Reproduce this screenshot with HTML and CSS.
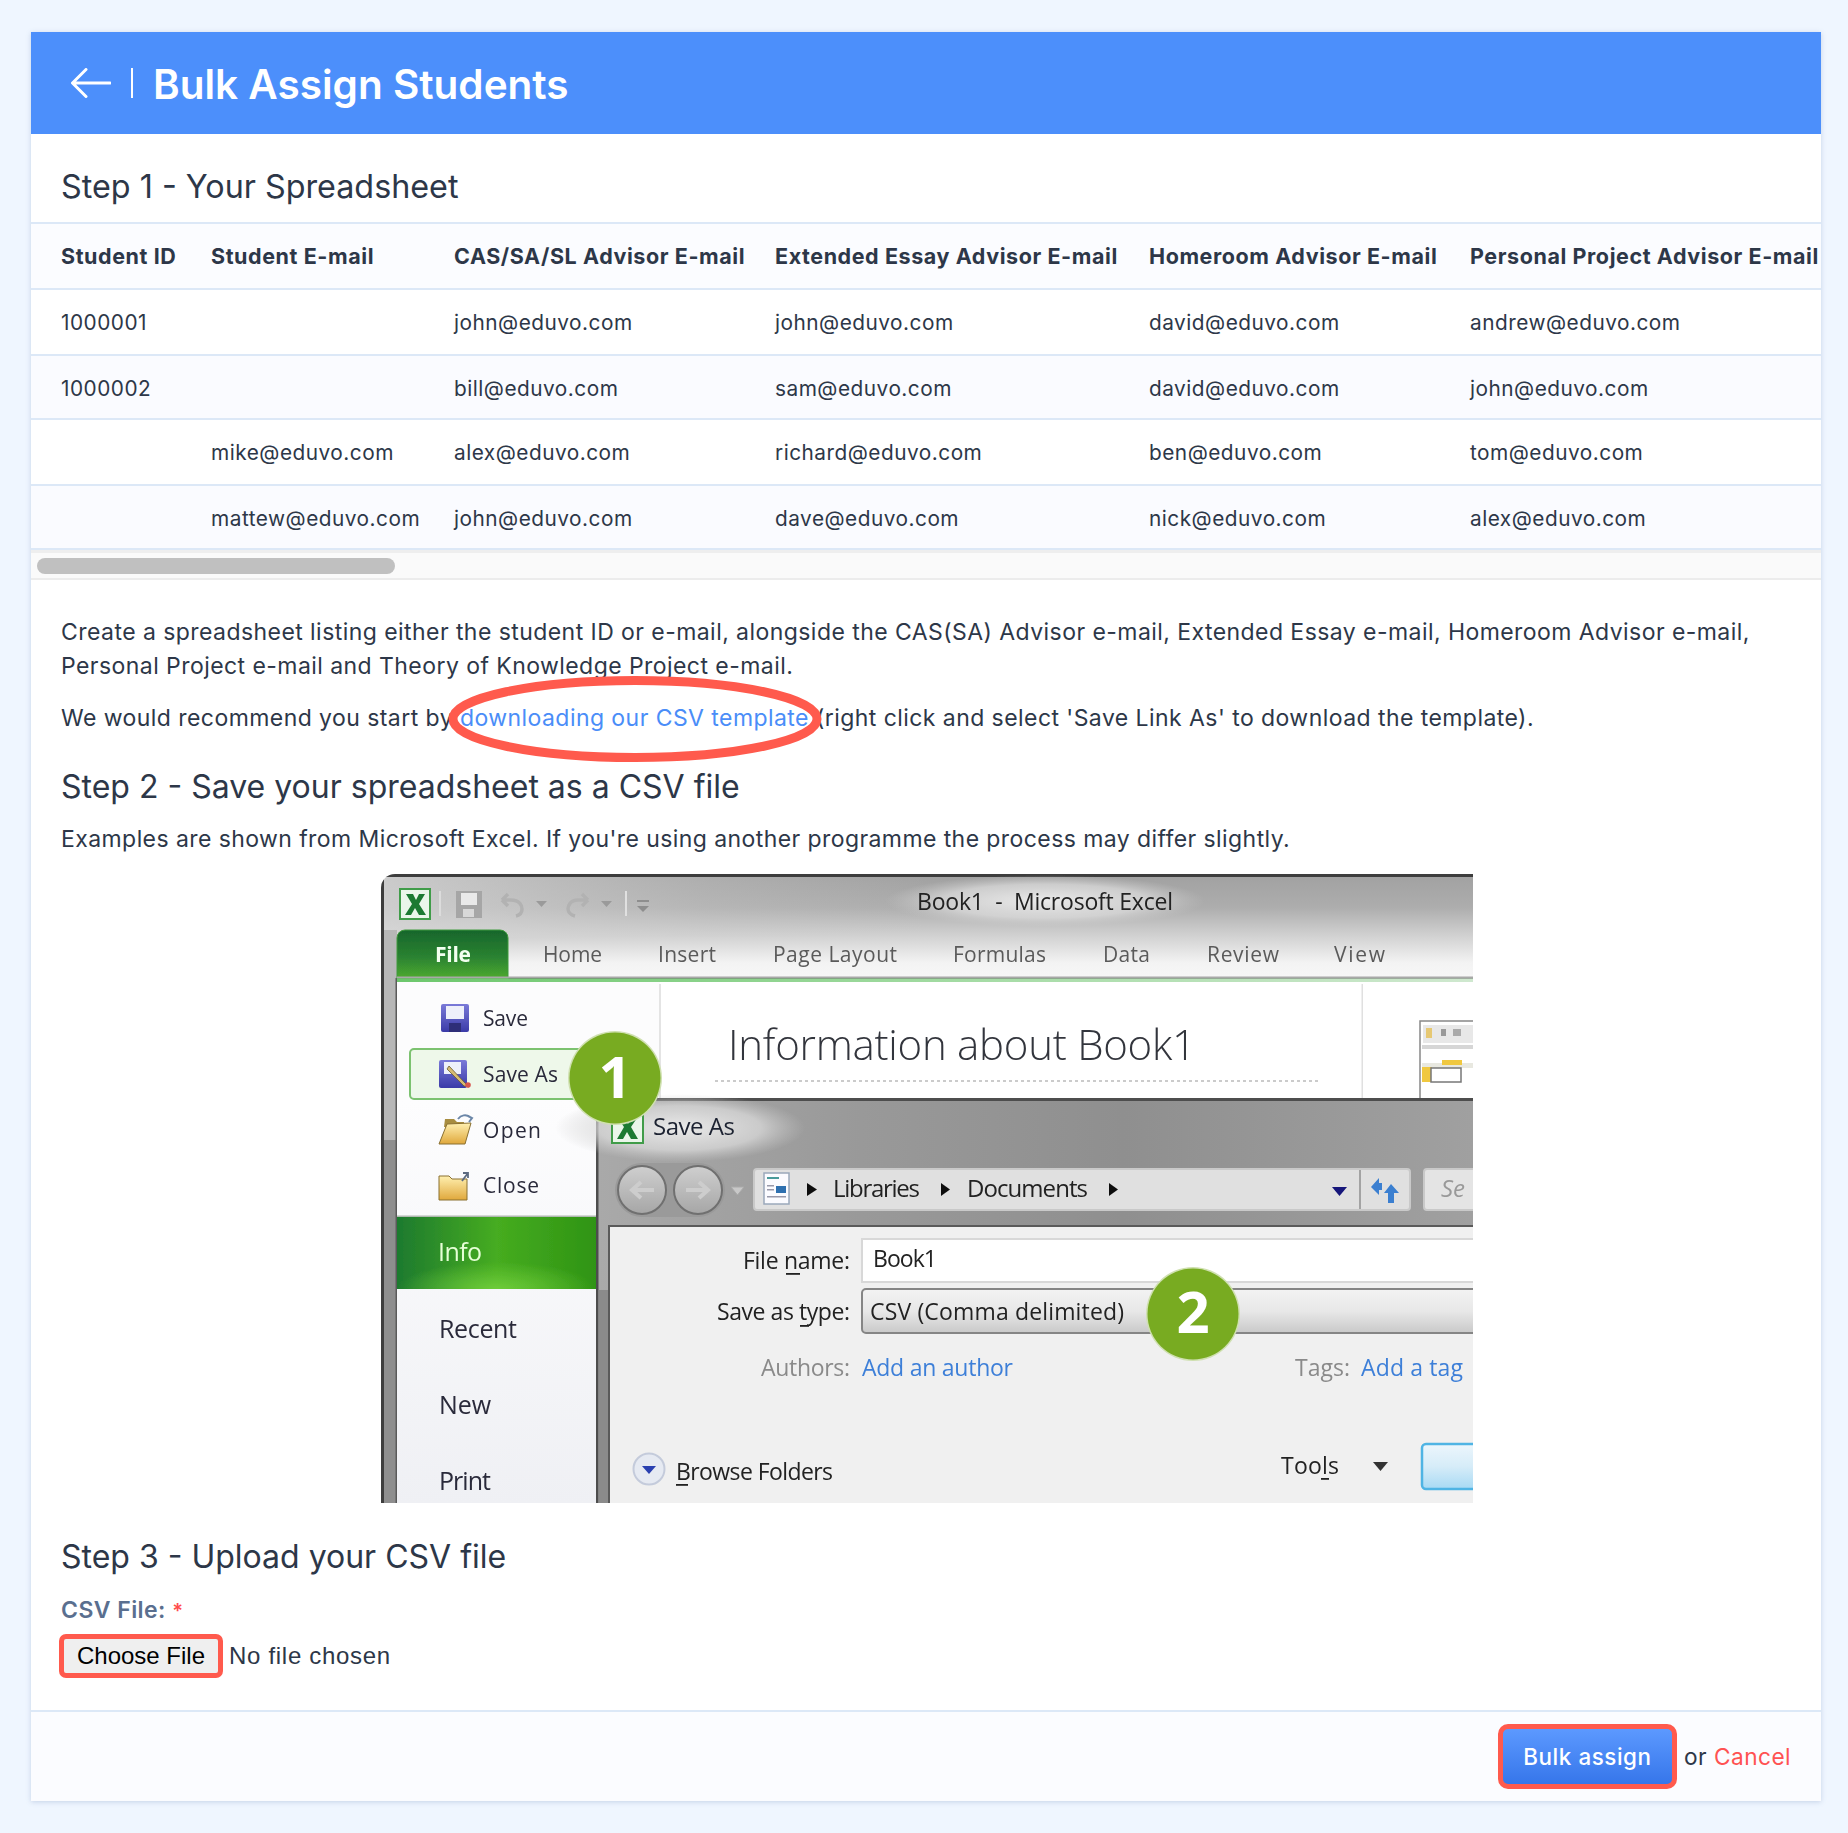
FILE: index.html
```html
<!DOCTYPE html>
<html lang="en">
<head>
<meta charset="utf-8">
<title>Bulk Assign Students</title>
<link rel="stylesheet" href="styles.css">
</head>
<body>
<main class="card">
  <header class="card-head">
    <a class="back" href="#" aria-label="Back">
      <svg class="back-icon" viewBox="0 0 40 30" width="40" height="30"><path d="M39 15H2M15 1.500 1.500 15 15 28.500" fill="none" stroke="#fff" stroke-width="3" stroke-linecap="round" stroke-linejoin="round"/></svg>
    </a>
    <span class="head-sep"></span>
    <h1>Bulk Assign Students</h1>
  </header>

  <h2 class="step-one">Step 1 - Your Spreadsheet</h2>

  <table class="sheet">
    <colgroup><col class="c1"><col class="c2"><col class="c3"><col class="c4"><col class="c5"><col class="c6"></colgroup>
    <thead>
      <tr><th>Student ID</th><th>Student E-mail</th><th>CAS/SA/SL Advisor E-mail</th><th>Extended Essay Advisor E-mail</th><th>Homeroom Advisor E-mail</th><th>Personal Project Advisor E-mail</th></tr>
    </thead>
    <tbody>
      <tr><td>1000001</td><td></td><td>john@eduvo.com</td><td>john@eduvo.com</td><td>david@eduvo.com</td><td>andrew@eduvo.com</td></tr>
      <tr><td>1000002</td><td></td><td>bill@eduvo.com</td><td>sam@eduvo.com</td><td>david@eduvo.com</td><td>john@eduvo.com</td></tr>
      <tr><td></td><td>mike@eduvo.com</td><td>alex@eduvo.com</td><td>richard@eduvo.com</td><td>ben@eduvo.com</td><td>tom@eduvo.com</td></tr>
      <tr><td></td><td>mattew@eduvo.com</td><td>john@eduvo.com</td><td>dave@eduvo.com</td><td>nick@eduvo.com</td><td>alex@eduvo.com</td></tr>
    </tbody>
  </table>
  <div class="scrollbar"><div class="thumb"></div></div>

  <section class="body">
    <p class="intro">Create a spreadsheet listing either the student ID or e-mail, alongside the CAS(SA) Advisor e-mail, Extended Essay e-mail, Homeroom Advisor e-mail, Personal Project e-mail and Theory of Knowledge Project e-mail.</p>
    <p class="recommend">We would recommend you start by <span class="circled"><a href="#">downloading our CSV template</a><svg class="ring" viewBox="0 0 376 86" width="376" height="86"><ellipse cx="188" cy="43" rx="182" ry="38.500" fill="none" stroke="#ff5a4d" stroke-width="9"/></svg></span> (right click and select 'Save Link As' to download the template).</p>

    <h2 class="step-two">Step 2 - Save your spreadsheet as a CSV file</h2>
    <p class="examples">Examples are shown from Microsoft Excel. If you're using another programme the process may differ slightly.</p>

    <svg class="excel" viewBox="381 874 1092 629" width="1092" height="629" role="img" aria-label="Microsoft Excel Save As dialog">
      <defs>
        <linearGradient id="glass" x1="0" y1="0" x2="0" y2="1"><stop offset="0" stop-color="#a2a2a2"/><stop offset=".3" stop-color="#adadad"/><stop offset=".62" stop-color="#d6d6d6"/><stop offset=".85" stop-color="#f3f3f3"/><stop offset="1" stop-color="#f7f7f7"/></linearGradient>
        <linearGradient id="glassLeft" x1="0" y1="0" x2="1" y2="0"><stop offset="0" stop-color="#d8d8d8" stop-opacity=".75"/><stop offset=".3" stop-color="#d0d0d0" stop-opacity=".25"/><stop offset=".5" stop-color="#d0d0d0" stop-opacity="0"/></linearGradient>
        <linearGradient id="tab" x1="0" y1="0" x2="0" y2="1"><stop offset="0" stop-color="#17662c"/><stop offset=".55" stop-color="#2a8230"/><stop offset="1" stop-color="#4eab2f"/></linearGradient>
        <linearGradient id="side" x1="0" y1="0" x2="0" y2="1"><stop offset="0" stop-color="#fdfdfe"/><stop offset="1" stop-color="#eff0f4"/></linearGradient>
        <linearGradient id="rule" x1="0" y1="0" x2="1" y2="0"><stop offset="0" stop-color="#6cc76c"/><stop offset=".55" stop-color="#a6dca6"/><stop offset="1" stop-color="#cfe8cf"/></linearGradient>
        <linearGradient id="info" x1="0" y1="0" x2="1" y2="0"><stop offset="0" stop-color="#1d7a2f"/><stop offset=".5" stop-color="#46ac20"/><stop offset="1" stop-color="#2f9414"/></linearGradient>
        <radialGradient id="infoGlow" cx=".5" cy="1" r=".5"><stop offset="0" stop-color="#72cf3c" stop-opacity=".9"/><stop offset="1" stop-color="#72cf3c" stop-opacity="0"/></radialGradient>
        <linearGradient id="dlg" x1="0" y1="0" x2="1" y2="0"><stop offset="0" stop-color="#a9a9a9"/><stop offset=".3" stop-color="#999"/><stop offset=".6" stop-color="#8f8f8f"/><stop offset="1" stop-color="#a0a0a0"/></linearGradient>
        <radialGradient id="glow"><stop offset="0" stop-color="#eee" stop-opacity=".95"/><stop offset=".65" stop-color="#ddd" stop-opacity=".7"/><stop offset="1" stop-color="#ccc" stop-opacity="0"/></radialGradient>
        <linearGradient id="nav" x1="0" y1="0" x2="0" y2="1"><stop offset="0" stop-color="#cfcfcf"/><stop offset="1" stop-color="#a6a6a6"/></linearGradient>
        <linearGradient id="select" x1="0" y1="0" x2="0" y2="1"><stop offset="0" stop-color="#f3f3f3"/><stop offset=".5" stop-color="#e8e8e8"/><stop offset="1" stop-color="#c9c9c9"/></linearGradient>
        <linearGradient id="okBtn" x1="0" y1="0" x2="0" y2="1"><stop offset="0" stop-color="#ecf6fc"/><stop offset=".5" stop-color="#d6ecf8"/><stop offset="1" stop-color="#a8daf4"/></linearGradient>
        <linearGradient id="floppy" x1="0" y1="0" x2="0" y2="1"><stop offset="0" stop-color="#7a7ad8"/><stop offset="1" stop-color="#3a3aa8"/></linearGradient>
        <linearGradient id="folder" x1="0" y1="0" x2="0" y2="1"><stop offset="0" stop-color="#fff0b0"/><stop offset="1" stop-color="#e0a83c"/></linearGradient>
        <clipPath id="win"><path d="M381 1503V888a14 14 0 0 1 14-14H1473V1503Z"/></clipPath>
        <filter id="soft" x="-2%" y="-2%" width="104%" height="104%"><feGaussianBlur stdDeviation=".6"/></filter>
      </defs>

      <g clip-path="url(#win)">
        <g filter="url(#soft)">
          <!-- window chrome -->
          <rect x="381" y="874" width="1092" height="630" fill="#3c3c3c"/>
          <rect x="384" y="877" width="1089" height="101" fill="url(#glass)"/>
          <rect x="384" y="877" width="1089" height="60" fill="url(#glassLeft)"/>
          <rect x="384" y="930" width="13" height="574" fill="#b7b7b7"/>
          <rect x="384" y="1140" width="13" height="364" fill="#8e8e8e"/>
          <rect x="395.500" y="978" width="1.500" height="526" fill="#5a5a5a"/>

          <!-- title -->
          <ellipse cx="1045" cy="901" rx="160" ry="26" fill="url(#glow)"/>
          <text class="xl xl-title" x="917" y="910" textLength="256">Book1&#160;&#160;-&#160;&#160;Microsoft Excel</text>

          <!-- quick access -->
          <rect x="400" y="889" width="30" height="30" fill="#eaf6ea" stroke="#3f9c4a" stroke-width="2"/>
          <path d="M406 894h7l3 6 3-6h6l-6 10 7 11h-7l-4-7-4 7h-6l7-11z" fill="#1f7a33"/>
          <rect x="439" y="891" width="2" height="25" fill="#dcdcdc"/>
          <path d="M456 891h26v27h-26z" fill="#a6a6a6"/><rect x="461" y="893" width="16" height="12" fill="#e9e9e9"/><rect x="463" y="909" width="11" height="8" fill="#d8d8d8"/>
          <path d="M502 900h9c9 0 11 6 11 9s-2 6-6 7M502 900l6-6M502 900l6 6" fill="none" stroke="#b2b2b2" stroke-width="3.500"/>
          <path d="M536 901h11l-5.500 6z" fill="#9a9a9a"/>
          <path d="M588 900h-10c-8 0-10 6-10 9s3 6 7 7M588 900l-6-6M588 900l-6 6" fill="none" stroke="#b2b2b2" stroke-width="3.500"/>
          <path d="M601 901h11l-5.500 6z" fill="#9a9a9a"/>
          <rect x="625" y="891" width="2" height="25" fill="#e0e0e0"/>
          <rect x="637" y="900" width="12" height="2" fill="#8e8e8e"/><path d="M637 906h12l-6 6z" fill="#8e8e8e"/>

          <!-- ribbon tabs -->
          <path d="M397 979v-41a8 8 0 0 1 8-8h95a8 8 0 0 1 8 8v41z" fill="url(#tab)" stroke="#3f9a3c" stroke-width="1"/>
          <text class="xl xl-file" x="435" y="962" textLength="36">File</text>
          <g class="xl xl-tab">
            <text x="543" y="962" textLength="59">Home</text>
            <text x="658" y="962" textLength="58">Insert</text>
            <text x="773" y="962" textLength="124">Page Layout</text>
            <text x="953" y="962" textLength="93">Formulas</text>
            <text x="1103" y="962" textLength="47">Data</text>
            <text x="1207" y="962" textLength="72">Review</text>
            <text x="1334" y="962" textLength="51">View</text>
          </g>
          <rect x="397" y="976.500" width="1076" height="2" fill="#a8a8a8"/>
          <rect x="397" y="978.500" width="1076" height="4" fill="url(#rule)"/>

          <!-- backstage -->
          <rect x="397" y="982" width="1076" height="118" fill="#fff"/>
          <rect x="397" y="982" width="263" height="120" fill="#fcfcfd"/>
          <rect x="397" y="1100" width="199" height="404" fill="url(#side)"/>
          <rect x="659" y="984" width="2" height="114" fill="#e4e4e4"/>
          <rect x="1361.500" y="984" width="1.500" height="114" fill="#e0e0e0"/>

          <!-- menu items -->
          <rect x="441" y="1004" width="28" height="28" rx="2" fill="url(#floppy)"/><rect x="446" y="1006" width="18" height="13" fill="#eef0fa"/><rect x="449" y="1023" width="12" height="9" fill="#2e2e78"/>
          <text class="xl xl-menu" x="483" y="1026" textLength="45">Save</text>
          <rect x="410" y="1049" width="185" height="50" rx="4" fill="#eef8ea" stroke="#7bc26f" stroke-width="2"/>
          <rect x="439" y="1060" width="28" height="28" rx="2" fill="url(#floppy)"/><rect x="444" y="1062" width="17" height="12" fill="#eef0fa"/>
          <path d="M449 1066l16 17 4 4-5-1-17-17z" fill="#d6bb72" stroke="#6a5a30" stroke-width=".8"/><circle cx="468" cy="1085" r="2.800" fill="#d8564e"/>
          <text class="xl xl-menu" x="483" y="1082" textLength="75">Save As</text>
          <path d="M445 1119h9l3 3h7v5h-20z" fill="#a88d40"/><path d="M447 1124l24-1-6 21h-26z" fill="url(#folder)" stroke="#8a7030" stroke-width="1"/><path d="M458 1119c3-4 8-5 12-2l-2-1 4 2-3 4" fill="none" stroke="#6c87a8" stroke-width="2"/>
          <text class="xl xl-menu" x="483" y="1138" textLength="58">Open</text>
          <path d="M439 1176h10l3 3h15v21h-28z" fill="url(#folder)" stroke="#8a7030" stroke-width="1"/><path d="M462 1181l6-8M463 1173h5v5" fill="none" stroke="#5b6a80" stroke-width="1.800"/>
          <text class="xl xl-menu" x="483" y="1193" textLength="56">Close</text>
          <rect x="397" y="1217" width="199" height="72" fill="url(#info)"/>
          <rect x="397" y="1235" width="199" height="54" fill="url(#infoGlow)"/>
          <rect x="397" y="1215.500" width="199" height="1.500" fill="#b0b8b0"/>
          <text class="xl xl-info" x="438" y="1261" textLength="44">Info</text>
          <g class="xl xl-nav">
            <text x="439" y="1338" textLength="78">Recent</text>
            <text x="439" y="1414" textLength="52">New</text>
            <text x="439" y="1490" textLength="52">Print</text>
          </g>

          <!-- information heading -->
          <text class="xl xl-infoh" x="728" y="1060" textLength="468">Information about Book1</text>
          <line x1="715" y1="1081" x2="1318" y2="1081" stroke="#bbb" stroke-width="1.500" stroke-dasharray="3 3"/>
          <rect x="1420" y="1021" width="60" height="80" fill="#fff" stroke="#888" stroke-width="1.500"/>
          <rect x="1423" y="1025" width="50" height="18" fill="#e8e8e8"/><rect x="1426" y="1028" width="6" height="10" fill="#e6c873"/><rect x="1441" y="1029" width="5" height="7" fill="#999"/><rect x="1453" y="1029" width="8" height="7" fill="#aaa"/>
          <rect x="1422" y="1045" width="51" height="4" fill="#d6d6d6"/><rect x="1422" y="1063" width="51" height="5" fill="#e8e8e0"/><rect x="1442" y="1060" width="20" height="5" fill="#f0c840"/><rect x="1422" y="1067" width="10" height="15" fill="#f0c840"/><rect x="1431" y="1068" width="30" height="14" fill="#fff" stroke="#777" stroke-width="1.500"/>

          <!-- dialog -->
          <rect x="596" y="1098" width="877" height="406" fill="#4d4d4d"/>
          <rect x="598.500" y="1101" width="874.500" height="403" fill="url(#dlg)"/>
          <rect x="598.500" y="1290" width="11" height="214" fill="#8b8b8b"/>
          <ellipse cx="680" cy="1128" rx="125" ry="34" fill="url(#glow)"/>
          <rect x="612" y="1113" width="31" height="30" fill="#eaf6ea" stroke="#3f9c4a" stroke-width="2"/>
          <path d="M618 1118h7l3 6 3-6h6l-6 9 7 12h-7l-4-7-4 7h-6l7-12z" fill="#1f7a33"/>
          <text class="xl xl-saveas" x="653" y="1135" textLength="82">Save As</text>

          <!-- navigation -->
          <path d="M642 1163h56a27 27 0 0 1 0 54h-56a27 27 0 0 1 0-54z" fill="#9a9a9a"/>
          <circle cx="642" cy="1190" r="24" fill="url(#nav)" stroke="#6f6f6f" stroke-width="2"/>
          <circle cx="698" cy="1190" r="24" fill="url(#nav)" stroke="#6f6f6f" stroke-width="2"/>
          <path d="M654 1190h-20M641 1182l-9 8 9 8" fill="none" stroke="#cdcdcd" stroke-width="4"/>
          <path d="M686 1190h20M699 1182l9 8-9 8" fill="none" stroke="#cdcdcd" stroke-width="4"/>
          <path d="M731 1187h13l-6.500 8z" fill="#c8c8c8" stroke="#aaa" stroke-width="1"/>

          <!-- address bar -->
          <rect x="754" y="1169" width="656" height="41" rx="3" fill="#e0e0e0" stroke="#c9c9c9" stroke-width="2"/>
          <line x1="1360" y1="1170" x2="1360" y2="1209" stroke="#8f8f8f" stroke-width="1.500"/>
          <rect x="764" y="1173" width="25" height="31" fill="#fbfbff" stroke="#9aa8bb" stroke-width="1.500"/><rect x="767" y="1177" width="12" height="2" fill="#4a9a9a"/><rect x="776" y="1186" width="10" height="7" fill="#2f6fb0"/><rect x="767" y="1196" width="19" height="1.500" fill="#99a"/><rect x="767" y="1185" width="7" height="1.500" fill="#99a"/><rect x="767" y="1189" width="7" height="1.500" fill="#99a"/>
          <path d="M807 1183l10 6.500-10 6.500z" fill="#111"/>
          <path d="M941 1183l9 6.500-9 6.500z" fill="#111"/>
          <path d="M1109 1183l9 6.500-9 6.500z" fill="#111"/>
          <g class="xl xl-addr">
            <text x="833" y="1197" textLength="87">Libraries</text>
            <text x="967" y="1197" textLength="121">Documents</text>
          </g>
          <path d="M1332 1187h15l-7.500 9z" fill="#14147a"/>
          <path d="M1371 1187l8-9v5h3v7h-3v5zM1399 1193l-8-9-7 9h4v10h6v-10z" fill="#3a7fd0"/>
          <rect x="1424" y="1169" width="60" height="41" rx="3" fill="#e4e4e4" stroke="#c9c9c9" stroke-width="2"/>
          <text class="xl xl-search" x="1441" y="1197">Se</text>

          <!-- form panel -->
          <rect x="609" y="1226" width="874" height="288" fill="#f0f0f0" stroke="#5a5a5a" stroke-width="2"/>
          <rect x="611" y="1228" width="862" height="276" fill="#f0f0f0"/>
          <g class="xl xl-form">
            <text x="743" y="1269" textLength="107">File name:</text>
            <text x="717" y="1320" textLength="133">Save as type:</text>
            <text x="676" y="1480" textLength="157">Browse Folders</text>
            <text x="1281" y="1474" textLength="58">Tools</text>
          </g>
          <rect x="786" y="1273" width="14" height="1.800" fill="#222"/><rect x="800" y="1325" width="9" height="1.800" fill="#222"/><rect x="676" y="1484" width="12" height="1.800" fill="#222"/><rect x="1321" y="1478" width="8" height="1.800" fill="#222"/>
          <rect x="862" y="1239" width="620" height="43" fill="#fff" stroke="#d8d8d8" stroke-width="2"/>
          <text class="xl xl-form" x="873" y="1267" textLength="64">Book1</text>
          <rect x="862" y="1289" width="620" height="44" rx="4" fill="url(#select)" stroke="#858585" stroke-width="2"/>
          <text class="xl xl-form" x="870" y="1320" textLength="254">CSV (Comma delimited)</text>
          <g class="xl xl-muted">
            <text x="761" y="1376" textLength="89">Authors:</text>
            <text x="1295" y="1376" textLength="55">Tags:</text>
          </g>
          <g class="xl xl-link">
            <text x="862" y="1376" textLength="151">Add an author</text>
            <text x="1361" y="1376" textLength="102">Add a tag</text>
          </g>
          <circle cx="649" cy="1469" r="15.500" fill="#e6eaf2" stroke="#c4cbdb" stroke-width="2"/>
          <path d="M642 1466h14l-7 8z" fill="#2a3fb0"/>
          <path d="M1373 1462h15l-7.500 9z" fill="#333"/>
          <rect x="1422" y="1444" width="70" height="45" rx="4" fill="url(#okBtn)" stroke="#4fb4e4" stroke-width="2.500"/>
        </g>

        <!-- step badges -->
        <circle cx="615" cy="1078" r="47" fill="#cfe0b0"/>
        <circle cx="615" cy="1078" r="45.500" fill="#78ab21"/>
        <text class="xl xl-badge" x="615" y="1098">1</text>
        <circle cx="1193" cy="1314" r="47" fill="#cfe0b0"/>
        <circle cx="1193" cy="1314" r="45.500" fill="#78ab21"/>
        <text class="xl xl-badge" x="1193" y="1333">2</text>
      </g>
    </svg>

    <h2 class="step-three">Step 3 - Upload your CSV file</h2>
    <label class="field-label">CSV File: <span class="req">*</span></label>
    <div class="file-row">
      <button class="choose" type="button">Choose File</button>
      <span class="no-file">No file chosen</span>
    </div>
  </section>

  <footer class="card-foot">
    <button class="primary" type="button">Bulk assign</button>
    <span class="or">or</span>
    <a class="cancel" href="#">Cancel</a>
  </footer>
</main>
</body>
</html>
```
FILE: styles.css
```css
* { box-sizing: border-box; }
html, body { margin: 0; }
body {
  background: #eff6ff;
  padding: 32px 27px 31px 31px;
  font-family: Inter, "Liberation Sans", sans-serif;
  font-size: 23px;
  letter-spacing: .44px;
  color: #2d3748;
}
.card {
  background: #fff;
  box-shadow: 0 1px 5px rgba(90, 120, 170, .28);
}
.card-head {
  height: 102px;
  background: #4c8ffb;
  display: flex;
  align-items: center;
  padding-left: 40px;
  color: #fff;
}
.back { display: flex; }
.back-icon { display: block; }
.head-sep { width: 2px; height: 30px; background: #fff; margin-left: 20px; margin-right: 20px; }
h1 { margin: 0; padding-top: 2px; font-size: 40.500px; font-weight: 600; letter-spacing: 0; }
h2 { margin: 0; font-size: 32px; font-weight: 400; letter-spacing: 0; line-height: 40px; }
.step-one { padding: 33px 30px 0; height: 90px; font-size: 32.300px; border-bottom: 2px solid #dce8f7; }

.sheet { width: 1790px; table-layout: fixed; border-collapse: separate; border-spacing: 0; }
.c1 { width: 150px; } .c2 { width: 243px; } .c3 { width: 321px; }
.c4 { width: 374px; } .c5 { width: 321px; } .c6 { width: 381px; }
.sheet th, .sheet td { padding: 0 0 0 30px; text-align: left; white-space: nowrap; line-height: 34px; }
.sheet th { height: 66px; background: #fbfcff; font-size: 21.500px; letter-spacing: .58px; font-weight: 700; border-bottom: 2px solid #dce8f7; }
.sheet td { height: 66px; font-size: 20.800px; letter-spacing: .5px; vertical-align: top; padding-top: 16px; border-bottom: 2px solid #dce8f7; }
.sheet tbody tr:nth-child(even) td { height: 64px; background: #fafbff; }

.scrollbar { height: 30px; background: #fafafa; border-top: 3px solid #eeeeee; border-bottom: 2px solid #ececec; padding: 5px 0 0 6px; }
.thumb { width: 358px; height: 16px; border-radius: 8px; background: #c0c0c0; }

.body { padding: 0 30px; }
p { margin: 0; line-height: 34px; }
.intro { padding-top: 35px; }
.recommend { margin-top: 18px; }
.circled { position: relative; }
.circled a { color: #4a8df8; text-decoration: none; }
.ring { position: absolute; left: -13px; top: -28px; pointer-events: none; }
.step-two { margin-top: 32px; }
.examples { margin-top: 15px; letter-spacing: .42px; }
.excel { display: block; margin: 18px 0 0 320px; }
.step-three { margin-top: 34px; }
.field-label { display: block; margin-top: 16px; font-weight: 600; color: #5a6f8f; line-height: 34px; }
.req { color: #ff4d4d; font-size: 20px; }
.file-row { display: flex; align-items: center; gap: 6px; margin: 6px 0 0 -2px; }
.choose {
  width: 164px; height: 44px; padding: 0;
  background: #efefef; border: 5px solid #ff5a4d; border-radius: 7px;
  font: 24px "Liberation Sans", sans-serif; color: #000;
}
.no-file { font-size: 24px; letter-spacing: .7px; font-family: "Liberation Sans", sans-serif; color: #2d3748; }

.card-foot {
  margin-top: 32px;
  height: 91px;
  background: #fbfcff;
  border-top: 2px solid #dce8f7;
  display: flex;
  align-items: center;
  justify-content: flex-end;
  padding-right: 30px;
}
.primary {
  width: 179px; height: 65px; padding: 0;
  border: 5px solid #ff5a4d; border-radius: 10px;
  background: linear-gradient(#5c99ff, #3676ea);
  color: #fff; font: 500 22.400px Inter, sans-serif; letter-spacing: .56px;
}
.or { margin-left: 7px; font-size: 22.700px; }
.cancel { margin-left: 7px; font-size: 22.700px; color: #ff5252; text-decoration: none; }

.xl { font-family: "Open Sans", sans-serif; letter-spacing: 0; }
.xl-title { font-size: 23px; fill: #222; }
.xl-file { font-size: 21px; font-weight: 700; fill: #f2fff0; }
.xl-tab { font-size: 21px; fill: #5a5a5a; }
.xl-menu { font-size: 21px; fill: #2a2a3a; }
.xl-info { font-size: 25px; fill: #e6ffd6; }
.xl-nav { font-size: 25px; fill: #2a2a3a; }
.xl-infoh { font-size: 42px; font-weight: 300; fill: #33353c; }
.xl-saveas { font-size: 24px; fill: #1c2230; }
.xl-addr { font-size: 24px; fill: #222; }
.xl-search { font-size: 24px; font-style: italic; fill: #999; }
.xl-form { font-size: 23px; fill: #222; }
.xl-muted { font-size: 23px; fill: #8a8a8a; }
.xl-link { font-size: 23px; fill: #3d7fd8; }
.xl-badge { font-size: 58px; font-weight: 700; fill: #fff; text-anchor: middle; }
```
